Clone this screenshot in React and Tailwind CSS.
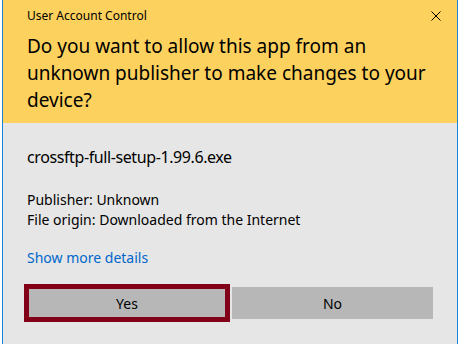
const App = () => {
  return (
    <div className="w-[459px] h-[344px] overflow-hidden bg-white pl-[2px] pr-[1px]" style={{ fontFamily: '"Noto Sans", "Open Sans", sans-serif' }}>
      <div className="h-full flex flex-col border-x border-[#1883d7]">
        <div className="relative h-[123px] bg-[#fdd15d] pl-[24px] pt-[8px] text-black">
          <div className="text-[12px] leading-[16px]">User Account Control</div>
          <svg className="absolute right-[16px] top-[11px]" width="10" height="10" viewBox="0 0 10 10">
            <path d="M0.5 0.5 L9.5 9.5 M9.5 0.5 L0.5 9.5" stroke="#000" strokeWidth="1" fill="none" />
          </svg>
          <h1 className="mt-[9px] text-[19px] leading-[27px] pr-[18px]">
            Do you want to allow this app from an unknown publisher to make changes to your device?
          </h1>
        </div>
        <div className="flex-1 bg-[#e6e6e6] pl-[24px] pr-[23px] text-black">
          <div className="mt-[23px] text-[16px] leading-[22px] tracking-[-0.4px]">crossftp-full-setup-1.99.6.exe</div>
          <div className="mt-[22px] text-[14px] leading-[20px]">
            <div>Publisher: Unknown</div>
            <div>File origin: Downloaded from the Internet</div>
          </div>
          <div className="mt-[18px] text-[14px] leading-[20px] text-[#0066cc]">Show more details</div>
          <div className="mt-[16px] -ml-[3px] flex items-center gap-[2px]">
            <button className="w-[206px] h-[38px] border-[5px] border-[#830019] bg-[#b7b7b7] text-[14px]">Yes</button>
            <button className="w-[201px] h-[32px] bg-[#b7b7b7] text-[14px]">No</button>
          </div>
        </div>
      </div>
    </div>
  );
};

export default App;
